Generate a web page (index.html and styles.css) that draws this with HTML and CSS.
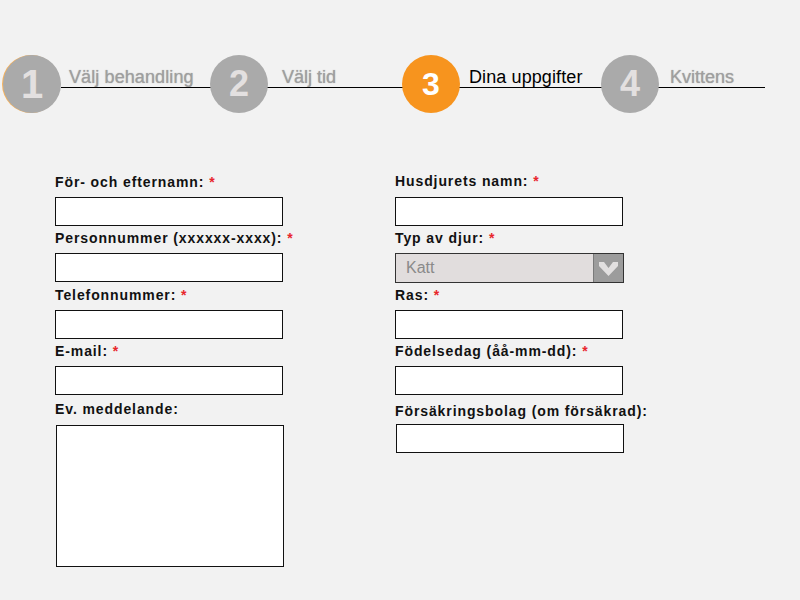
FILE: index.html
```html
<!DOCTYPE html>
<html lang="sv">
<head>
<meta charset="utf-8">
<title>Dina uppgifter</title>
<link rel="stylesheet" href="styles.css">
</head>
<body>
<div class="stepper">
  <div class="line"></div>
  <div class="step s1"><div class="circle first">1</div><span class="step-label">Välj behandling</span></div>
  <div class="step s2"><div class="circle">2</div><span class="step-label">Välj tid</span></div>
  <div class="step s3"><div class="circle active">3</div><span class="step-label current">Dina uppgifter</span></div>
  <div class="step s4"><div class="circle">4</div><span class="step-label">Kvittens</span></div>
</div>

<form class="form">
  <div class="col">
    <div class="field">
      <label class="lbl">För- och efternamn: <span class="req">*</span></label>
      <input class="inp" type="text">
    </div>
    <div class="field wide">
      <label class="lbl">Personnummer (xxxxxx-xxxx): <span class="req">*</span></label>
      <input class="inp" type="text">
    </div>
    <div class="field">
      <label class="lbl">Telefonnummer: <span class="req">*</span></label>
      <input class="inp" type="text">
    </div>
    <div class="field msg-before">
      <label class="lbl">E-mail: <span class="req">*</span></label>
      <input class="inp" type="text">
    </div>
    <div class="field">
      <label class="lbl">Ev. meddelande:</label>
      <textarea class="area"></textarea>
    </div>
  </div>
  <div class="col right">
    <div class="field top">
      <label class="lbl">Husdjurets namn: <span class="req">*</span></label>
      <input class="inp" type="text">
    </div>
    <div class="field">
      <label class="lbl">Typ av djur: <span class="req">*</span></label>
      <div class="select">
        <span class="select-value">Katt</span>
        <span class="select-btn">
          <svg width="19" height="15" viewBox="0 0 19 15"><polygon points="0,1 5,1 9.5,7 14,1 19,1 19,5 9.5,15 0,5" fill="#e2e0e0"/></svg>
        </span>
      </div>
    </div>
    <div class="field">
      <label class="lbl">Ras: <span class="req">*</span></label>
      <input class="inp" type="text">
    </div>
    <div class="field">
      <label class="lbl">Födelsedag (åå-mm-dd): <span class="req">*</span></label>
      <input class="inp" type="text">
    </div>
    <div class="field last">
      <label class="lbl">Försäkringsbolag (om försäkrad):</label>
      <input class="inp shift" type="text">
    </div>
  </div>
</form>
</body>
</html>
```

FILE: styles.css
```css
html, body {
  margin: 0;
  padding: 0;
  background: #f2f2f2;
  font-family: "Liberation Sans", Arial, sans-serif;
}

.stepper {
  position: relative;
  display: flex;
  padding: 55px 0 0 3px;
  height: 58px;
}

.line {
  position: absolute;
  left: 61px;
  top: 87px;
  width: 704px;
  height: 1px;
  background: #000;
}

.step {
  display: flex;
  align-items: flex-start;
}
.s1 { width: 207px; }
.s2 { width: 192px; }
.s3 { width: 199px; }

.circle {
  position: relative;
  z-index: 1;
  width: 58px;
  height: 58px;
  border-radius: 50%;
  background: #aaaaaa;
  color: #e3e0e0;
  font-weight: bold;
  font-size: 36px;
  line-height: 58px;
  text-align: center;
  flex: none;
}
.circle.first {
  box-shadow: -1px 0 0 #f6b25c;
  font-size: 40px;
}
.circle.active {
  background: #f7941e;
  color: #fff;
  font-size: 32px;
}

.step-label {
  margin-top: 12px;
  font-size: 18px;
  line-height: 21px;
  color: #9f9f9f;
  text-shadow: 0 0 1px rgba(90, 90, 90, 0.5);
  position: relative;
  z-index: 1;
}
.s1 .step-label { margin-left: 8px; letter-spacing: 0.1px; }
.s2 .step-label { margin-left: 14px; }
.s3 .step-label { margin-left: 9px; letter-spacing: 0.1px; }
.s4 .step-label { margin-left: 11px; }
.step-label.current {
  color: #000;
  text-shadow: none;
}

.form {
  display: flex;
  padding: 61px 0 0 55px;
}

.col {
  width: 340px;
  display: flex;
  flex-direction: column;
}
.col.right { margin-top: -1px; }

.field {
  display: flex;
  flex-direction: column;
  align-items: flex-start;
  margin-bottom: 4px;
}
.field.wide { margin-bottom: 5px; }
.field.msg-before { margin-bottom: 6px; }

.lbl {
  font-size: 14px;
  line-height: 16px;
  font-weight: bold;
  letter-spacing: 0.9px;
  color: #111;
  margin-bottom: 7px;
}
.field.top .lbl { margin-bottom: 8px; }

.req { color: #e8262c; }

.inp {
  box-sizing: border-box;
  width: 228px;
  height: 29px;
  margin: 0;
  border: 1px solid #111;
  background: #fff;
  border-radius: 0;
  padding: 0 4px;
}

.area {
  box-sizing: border-box;
  width: 228px;
  height: 142px;
  margin: 1px 0 0 1px;
  border: 1px solid #111;
  background: #fff;
  resize: none;
  border-radius: 0;
}

.select {
  box-sizing: border-box;
  width: 229px;
  height: 30px;
  border: 1px solid #333;
  background: #e1dddd;
  display: flex;
  align-items: stretch;
}
.select-value {
  flex: 1;
  padding-left: 10px;
  font-size: 16px;
  line-height: 28px;
  color: #8a8a8a;
}
.select-btn {
  width: 29px;
  background: #9c9c9c;
  border-left: 1px solid #7a7a7a;
  display: flex;
  align-items: center;
  justify-content: center;
}

.field.last { margin-top: 4px; }
.field.last .lbl { margin-bottom: 5px; }
.inp.shift { margin-left: 1px; }
```
